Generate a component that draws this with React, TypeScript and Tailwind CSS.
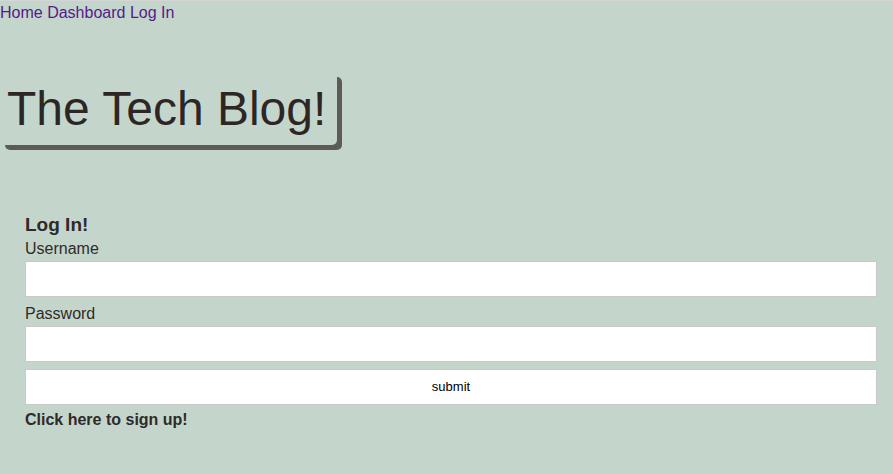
export default function App() {
  return (
    <div className="min-h-[474px] bg-[#c4d6cc] font-['Liberation_Sans',Arial,sans-serif] text-[#302a28]">
      <div className="h-px bg-[#d3d6d4]" />

      {/* Nav */}
      <nav className="pt-[3px] text-[16px] leading-[18px] text-[#551a8b]">
        <a href="#">Home</a> <a href="#">Dashboard</a> <a href="#">Log In</a>
      </nav>

      {/* Title */}
      <div className="mt-[50px] inline-block rounded-[5px] pl-[7px] pr-[11px] py-[9px] shadow-[5px_5px_0_#5f5957]">
        <h1 className="text-[48px] leading-[55px] text-[#2e2624]">The Tech Blog!</h1>
      </div>

      {/* Login form */}
      <form className="ml-[25px] mr-[16px] mt-[69px] flex flex-col">
        <h3 className="mb-[3px] text-[19px] font-bold leading-[22px]">Log In!</h3>
        <label className="text-[16px] leading-[20px]">Username</label>
        <input
          type="text"
          className="mt-[2px] h-[36px] border border-[#c9c9c9] bg-white"
        />
        <label className="mt-[7px] text-[16px] leading-[20px]">Password</label>
        <input
          type="password"
          className="mt-[2px] h-[36px] border border-[#c9c9c9] bg-white"
        />
        <button
          type="button"
          className="mt-[7px] h-[36px] border border-[#c9c9c9] bg-white text-[13px] text-black"
        >
          submit
        </button>
        <a href="#" className="mt-[5px] text-[16px] font-bold leading-[20px]">
          Click here to sign up!
        </a>
      </form>
    </div>
  );
}
